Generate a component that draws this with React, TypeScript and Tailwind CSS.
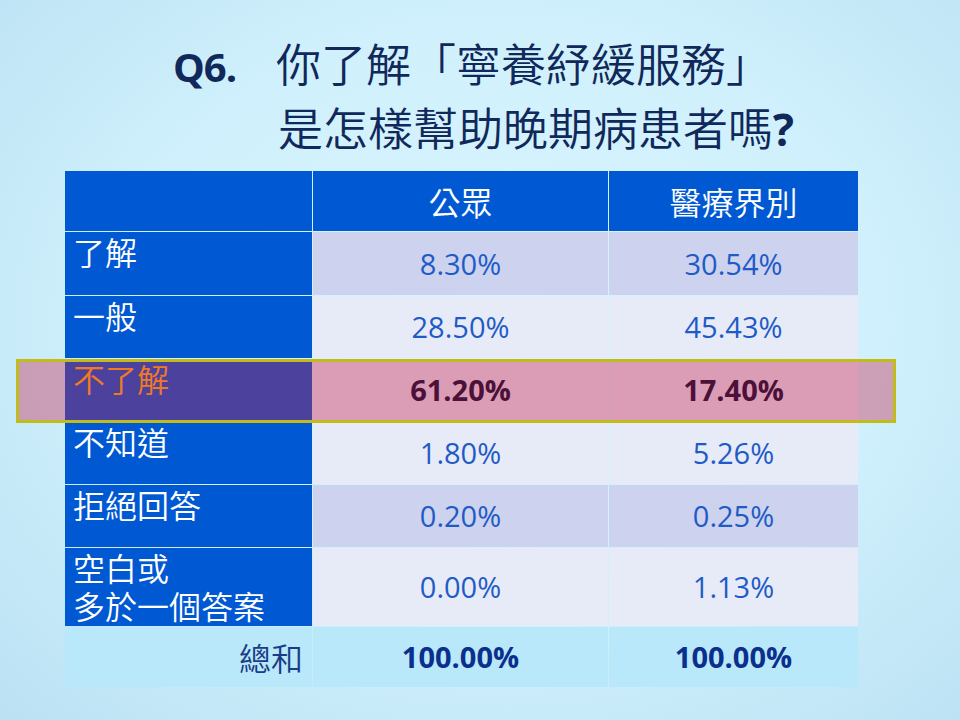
const rows = [
  { label: ['了解'], a: '8.30%', b: '30.54%', tone: 'odd' },
  { label: ['一般'], a: '28.50%', b: '45.43%', tone: 'even' },
  { label: ['不了解'], a: '61.20%', b: '17.40%', tone: 'hot' },
  { label: ['不知道'], a: '1.80%', b: '5.26%', tone: 'even' },
  { label: ['拒絕回答'], a: '0.20%', b: '0.25%', tone: 'odd' },
  { label: ['空白或', '多於一個答案'], a: '0.00%', b: '1.13%', tone: 'even' },
]

const heights = ['h-[63px]', 'h-[62px]', 'h-[62px]', 'h-[62px]', 'h-[62px]', 'h-[78px]']

const cjk = "font-['Noto_Sans_CJK_TC','Noto_Sans_CJK_SC',sans-serif] font-[350]"
const num = "font-['Open_Sans','Noto_Sans_CJK_TC',sans-serif]"

function DataCell({ value, tone, h }: { value: string; tone: string; h: string }) {
  const bg = tone === 'odd' ? 'bg-[#cdd2ee]' : 'bg-[#e7ebf8]'
  if (tone === 'hot') {
    return (
      <div className={`${h} ${bg} flex items-center justify-center`}>
        <span className={`relative z-20 ${num} text-[29px] font-bold text-[#4b1139]`}>{value}</span>
      </div>
    )
  }
  return (
    <div className={`${h} ${bg} flex items-center justify-center`}>
      <span className={`${num} text-[29px] text-[#1f5bc6]`}>{value}</span>
    </div>
  )
}

export default function App() {
  return (
    <div className="relative w-[960px] h-[720px] overflow-hidden bg-[radial-gradient(ellipse_at_52%_45%,#d9f5fe_0%,#cff0fc_55%,#bbe1f3_100%)]">
      {/* title */}
      <div className="pt-[31px] text-[#10285a]">
        <div className="flex items-baseline h-[64px] leading-[64px]">
          <span className={`ml-[173px] w-[103px] ${num} font-bold text-[40px] tracking-[-1px]`}>Q6.</span>
          <span className={`${cjk} text-[45px]`}>你了解「寧養紓緩服務」</span>
        </div>
        <div className="flex items-baseline h-[64px] leading-[64px] pl-[278px]">
          <span className={`${cjk} text-[45px]`}>是怎樣幫助晚期病患者嗎</span>
          <span className={`${num} font-bold text-[44px]`}>?</span>
        </div>
      </div>

      {/* table */}
      <div className="mt-[12px] ml-[65px] w-[793px] grid grid-cols-[247px_295px_249px] gap-px">
        <div className="h-[60px] bg-[#0059d2]" />
        <div className={`h-[60px] bg-[#0059d2] flex items-center justify-center ${cjk} text-[32px] text-white`}>公眾</div>
        <div className={`h-[60px] bg-[#0059d2] flex items-center justify-center ${cjk} text-[32px] text-white`}>醫療界別</div>

        {rows.map((r, i) => (
          <div key={r.a + i} className="contents">
            <div className={`${heights[i]} bg-[#0059d2] pl-[8px] ${cjk} text-[32px] leading-[38px] ${r.tone === 'hot' ? 'text-[#f07a24]' : 'text-white'}`}>
              {r.label.map((l) => (
                <div key={l} className={r.tone === 'hot' ? 'relative z-20' : ''}>{l}</div>
              ))}
            </div>
            <DataCell value={r.a} tone={r.tone} h={heights[i]} />
            <DataCell value={r.b} tone={r.tone} h={heights[i]} />
          </div>
        ))}

        <div className={`h-[60px] bg-[#b8e8fa] flex items-center justify-end pr-[9px] ${cjk} text-[32px] text-[#1a3c86]`}>總和</div>
        <div className={`h-[60px] bg-[#b8e8fa] flex items-center justify-center ${num} font-bold text-[29px] text-[#0b2f8c]`}>100.00%</div>
        <div className={`h-[60px] bg-[#b8e8fa] flex items-center justify-center ${num} font-bold text-[29px] text-[#0b2f8c]`}>100.00%</div>
      </div>

      {/* highlight over the 不了解 row */}
      <div className="absolute z-10 left-[16px] top-[359px] w-[880px] h-[64px] border-[3px] border-[#c2bc1a] bg-[rgba(200,30,70,0.38)] pointer-events-none" />
    </div>
  )
}
